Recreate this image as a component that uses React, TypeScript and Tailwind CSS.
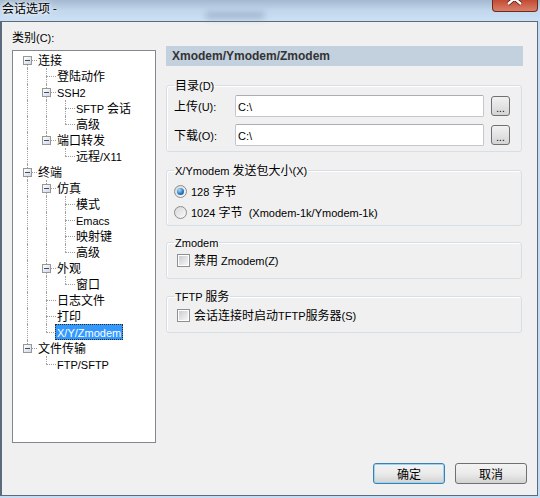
import React from "react";

type Node = { label: string; selected?: boolean; children?: Node[] };

const tree: Node[] = [
  {
    label: "连接",
    children: [
      { label: "登陆动作" },
      { label: "SSH2", children: [{ label: "SFTP 会话" }, { label: "高级" }] },
      { label: "端口转发", children: [{ label: "远程/X11" }] },
    ],
  },
  {
    label: "终端",
    children: [
      {
        label: "仿真",
        children: [{ label: "模式" }, { label: "Emacs" }, { label: "映射键" }, { label: "高级" }],
      },
      { label: "外观", children: [{ label: "窗口" }] },
      { label: "日志文件" },
      { label: "打印" },
      { label: "X/Y/Zmodem", selected: true },
    ],
  },
  { label: "文件传输", children: [{ label: "FTP/SFTP" }] },
];

type Row = { node: Node; guides: boolean[]; hasNext: boolean; first: boolean };

// walk the tree into flat rows, remembering which ancestor columns keep a line
function flatten(nodes: Node[], guides: boolean[], rows: Row[], root: boolean) {
  nodes.forEach((n, i) => {
    const hasNext = i < nodes.length - 1;
    rows.push({ node: n, guides, hasNext, first: root && i === 0 });
    if (n.children) flatten(n.children, [...guides, hasNext], rows, false);
  });
  return rows;
}

const rows = flatten(tree, [], [], true);

// Chinese runs use the CJK face at 12px, everything else the narrower latin face at 11px
function Txt({ s }: { s: string }) {
  const parts = s.split(/([\u3000-\u9fff]+)/).filter(Boolean);
  return (
    <>
      {parts.map((p, i) =>
        /[\u3000-\u9fff]/.test(p) ? (
          <span key={i} className="font-['Noto_Sans_CJK_SC',sans-serif] text-[12px] leading-none">
            {p}
          </span>
        ) : (
          <span key={i} className="font-['Liberation_Sans',sans-serif] text-[11px] leading-none">
            {p}
          </span>
        )
      )}
    </>
  );
}

function TreeRow({ row }: { row: Row }) {
  const { node, guides, hasNext, first } = row;
  return (
    <div className="flex h-4 items-center">
      {guides.map((g, i) => (
        <span key={i} className="relative h-4 w-[19px] shrink-0">
          {g && <span className="absolute left-[9px] top-0 h-4 border-l border-dotted border-[#a0a0a0]" />}
        </span>
      ))}
      <span className="relative h-4 w-[19px] shrink-0">
        <span
          className={`absolute left-[9px] border-l border-dotted border-[#a0a0a0] ${first ? "top-[8px]" : "top-0"} ${
            hasNext ? "bottom-0" : "h-[8px]"
          }`}
        />
        <span className="absolute left-[9px] right-0 top-[8px] border-t border-dotted border-[#a0a0a0]" />
        {node.children && (
          <span className="absolute left-[5px] top-[4px] flex h-[9px] w-[9px] items-center justify-center border border-[#989898] bg-gradient-to-br from-white to-[#d8d8d8]">
            <span className="h-px w-[5px] bg-[#2b4f9a]" />
          </span>
        )}
      </span>
      <span
        className={`h-4 whitespace-nowrap pr-[1px] leading-[14px] ${
          node.selected ? "-ml-px border border-dotted border-[#3a2a10] bg-[#3399ff] pl-px text-white" : "border border-transparent text-black"
        }`}
      >
        <Txt s={node.label} />
      </span>
    </div>
  );
}

function Radio({ checked }: { checked?: boolean }) {
  return (
    <span className="flex h-[13px] w-[13px] shrink-0 items-center justify-center rounded-full border border-[#8d8d8d] bg-gradient-to-br from-[#d6d6d6] to-[#fbfbfb]">
      {checked && (
        <span className="h-[7px] w-[7px] rounded-full bg-[radial-gradient(circle_at_35%_30%,#a8dcff,#2a7fc4_55%,#0c3f70)]" />
      )}
    </span>
  );
}

function Check() {
  return (
    <span className="flex h-[13px] w-[13px] shrink-0 items-center justify-center border border-[#8e8f8f] bg-white">
      <span className="h-[9px] w-[9px] bg-gradient-to-br from-[#c9ccd1] to-[#f7f7f7]" />
    </span>
  );
}

function Group({ title, className, children }: { title: string; className: string; children: React.ReactNode }) {
  return (
    <fieldset className={`rounded-[3px] border border-[#d5dfe5] px-[7px] shadow-[inset_1px_1px_0_#fff] ${className}`}>
      <legend className="px-[1px] leading-4">
        <Txt s={title} />
      </legend>
      {children}
    </fieldset>
  );
}

function PathRow({ label }: { label: string }) {
  return (
    <div className="flex h-[22px] items-center">
      <span className="w-[61px] leading-4">
        <Txt s={label} />
      </span>
      <div className="h-[22px] w-[249px] rounded-[2px] border border-[#c3c6cc] border-t-[#abadb3] bg-white pl-[2px] leading-5">
        <Txt s="C:\" />
      </div>
      <button className="ml-[7px] flex h-5 w-[19px] items-end justify-center rounded-[3px] border border-[#707070] bg-gradient-to-b from-[#f2f2f2] to-[#d4d4d4] pb-[1px] font-['Liberation_Sans',sans-serif] text-[10px] leading-[10px]">
        ...
      </button>
    </div>
  );
}

function DlgButton({ label, primary }: { label: string; primary?: boolean }) {
  return (
    <button
      className={`h-[21px] w-[72px] rounded-[3px] border bg-gradient-to-b from-[#f3f3f3] via-[#ebebeb] to-[#d2d2d2] leading-4 ${
        primary ? "border-[#3c7fb1] shadow-[inset_0_0_0_1px_#9ad6f2]" : "border-[#707070]"
      }`}
    >
      {label}
    </button>
  );
}

export default function App() {
  return (
    <div className="flex h-[498px] w-[540px] flex-col bg-[#c6dcf2] font-['Noto_Sans_CJK_SC',sans-serif] text-[12px] text-black">
      {/* glass caption */}
      <div className="relative flex h-[21px] shrink-0 items-start bg-gradient-to-b from-[#a4b9cf] via-[#c2d7ec] to-[#cde1f5]">
        <span className="pl-[2px] leading-4 [text-shadow:0_0_6px_#fff,0_0_3px_#fff]">会话选项 -</span>
        <span className="absolute left-[205px] top-[12px] h-[7px] w-[60px] rounded-full bg-[#7d93ab] opacity-50 blur-[3px]" />
        <button className="ml-auto mr-[2px] h-[12px] w-[46px] overflow-hidden rounded-b-[4px] border border-t-0 border-[#6e2a1c] bg-gradient-to-b from-[#c24a33] to-[#d9806a]">
          <svg width="46" height="12" viewBox="0 0 46 12">
            <path d="M15 -7 L28 4 M28 -7 L15 4" stroke="#5a1a10" strokeWidth="4" />
            <path d="M15 -7 L28 4 M28 -7 L15 4" stroke="#ffffff" strokeWidth="2.4" />
          </svg>
        </button>
      </div>

      {/* dialog body */}
      <div className="mr-[2px] flex h-[475px] flex-col border-b border-l-2 border-r border-t border-[#5b6b7d] bg-[#f0f0f0]">
        <div className="flex items-start">
          <div className="pl-[10px] pt-[7px]">
            <div className="mb-[5px] leading-4">
              <Txt s="类别(C):" />
            </div>
            <div className="h-[393px] w-[144px] border border-[#828790] bg-white pl-[5px] pt-[1px]">
              {rows.map((r, i) => (
                <TreeRow key={i} row={r} />
              ))}
            </div>
          </div>

          <div className="ml-[10px] w-[357px] pt-[24px]">
            <div className="h-5 bg-[#c3d0dd] pl-[6px] font-['Liberation_Sans',sans-serif] text-[12px] font-bold leading-5 text-[#333]">
              Xmodem/Ymodem/Zmodem
            </div>

            <Group title="目录(D)" className="mr-[1px] mt-[11px] pb-[5px] pt-[2px]">
              <div className="flex flex-col gap-[7px]">
                <PathRow label="上传(U):" />
                <PathRow label="下载(O):" />
              </div>
            </Group>

            <Group title="X/Ymodem 发送包大小(X)" className="mr-[1px] mt-[10px] pb-[5px] pt-[5px]">
              <div className="flex flex-col gap-[5px]">
                <label className="flex h-4 items-center gap-[4px] leading-4">
                  <Radio checked />
                  <span>
                    <Txt s="128 字节" />
                  </span>
                </label>
                <label className="flex h-4 items-center gap-[4px] leading-4">
                  <Radio />
                  <span>
                    <Txt s={"1024 字节\u00a0\u00a0(Xmodem-1k/Ymodem-1k)"} />
                  </span>
                </label>
              </div>
            </Group>

            <Group title="Zmodem" className="mr-[1px] mt-[8px] pb-[10px] pt-[2px]">
              <label className="ml-[3px] flex h-4 items-center gap-[4px] leading-4">
                <Check />
                <span>
                  <Txt s="禁用 Zmodem(Z)" />
                </span>
              </label>
            </Group>

            <Group title="TFTP 服务" className="mr-[1px] mt-[9px] pb-[9px] pt-[3px]">
              <label className="ml-[3px] flex h-4 items-center gap-[4px] leading-4">
                <Check />
                <span>
                  <Txt s="会话连接时启动TFTP服务器(S)" />
                </span>
              </label>
            </Group>
          </div>
        </div>

        <div className="mt-auto flex justify-end gap-[10px] pb-[11px] pr-[10px]">
          <DlgButton label="确定" primary />
          <DlgButton label="取消" />
        </div>
      </div>
    </div>
  );
}
